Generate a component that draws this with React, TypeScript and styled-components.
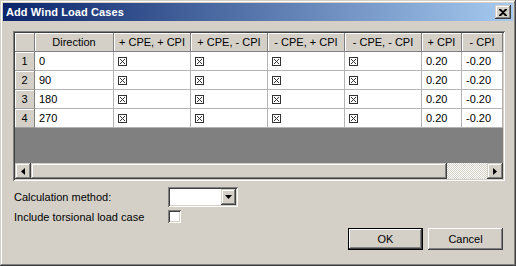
import React from "react";
import styled, { createGlobalStyle } from "styled-components";

const FACE = "#D4D0C8";

const GlobalStyle = createGlobalStyle`
  html, body { margin: 0; padding: 0; background: ${FACE}; }
  body { font-family: "Liberation Sans", Arial, sans-serif; font-size: 11px; color: #000; }
`;

const raised = `
  background: ${FACE};
  box-shadow: inset -1px -1px #404040, inset 1px 1px ${FACE}, inset -2px -2px #808080, inset 2px 2px #fff;
`;

const sunken = `
  box-shadow: inset 1px 1px #808080, inset -1px -1px #fff, inset 2px 2px #404040, inset -2px -2px ${FACE};
`;

const Window = styled.div`
  width: 516px;
  height: 266px;
  box-sizing: border-box;
  padding: 3px;
  display: flex;
  flex-direction: column;
  ${raised}
`;

const TitleBar = styled.div`
  height: 18px;
  flex: none;
  display: flex;
  align-items: center;
  justify-content: space-between;
  padding: 0 2px 0 3px;
  background: linear-gradient(to right, #0a246a, #a6caf0);
`;

const Title = styled.span`
  color: #fff;
  font-weight: bold;
  font-size: 11px;
  letter-spacing: 0.1px;
`;

const CloseButton = styled.div`
  width: 16px;
  height: 14px;
  display: flex;
  align-items: center;
  justify-content: center;
  ${raised}
`;

const Body = styled.div`
  flex: 1;
  display: flex;
  flex-direction: column;
  padding: 10px 8px 0 10px;
`;

const GridFrame = styled.div`
  width: 492px;
  height: 150px;
  box-sizing: border-box;
  padding: 2px;
  display: flex;
  flex-direction: column;
  background: #808080;
  ${sunken}
`;

const Table = styled.div`
  display: grid;
  grid-template-columns: 20px 79px 77px 77px 77px 77px 40px 41px;
  grid-auto-rows: 19px;
  flex: none;
`;

const HeadCell = styled.div<{ $corner?: boolean }>`
  box-sizing: border-box;
  background: ${FACE};
  border-right: 1px solid #808080;
  border-bottom: 1px solid #808080;
  box-shadow: inset 1px 1px #fff;
  display: flex;
  align-items: center;
  justify-content: center;
  font-size: 11px;
  white-space: nowrap;
`;

const RowHead = styled(HeadCell)`
  justify-content: center;
  border-bottom-color: #a0a0a0;
`;

const Cell = styled.div`
  box-sizing: border-box;
  background: #fff;
  border-right: 1px solid #b4b4b4;
  border-bottom: 1px solid #b4b4b4;
  display: flex;
  align-items: center;
  padding-left: 4px;
  font-size: 11px;
  white-space: nowrap;
`;

const Empty = styled.div`
  flex: 1;
  background: #808080;
`;

const ScrollBar = styled.div`
  height: 16px;
  flex: none;
  display: flex;
  background: ${FACE};
`;

const ScrollButton = styled.div`
  width: 16px;
  height: 16px;
  flex: none;
  display: flex;
  align-items: center;
  justify-content: center;
  ${raised}
`;

const Thumb = styled.div`
  width: 416px;
  height: 16px;
  ${raised}
`;

const Track = styled.div`
  flex: 1;
  background: repeating-conic-gradient(#fff 0 25%, ${FACE} 0 50%) 0 0 / 2px 2px;
`;

const Form = styled.div`
  display: grid;
  grid-template-columns: 155px auto;
  align-items: center;
  margin-top: 6px;
  row-gap: 3px;
`;

const Label = styled.span`
  font-size: 11px;
  padding-left: 1px;
`;

const Combo = styled.div`
  width: 70px;
  height: 20px;
  box-sizing: border-box;
  padding: 2px;
  background: #fff;
  display: flex;
  justify-content: flex-end;
  ${sunken}
`;

const ComboButton = styled(ScrollButton)`
  width: 15px;
  height: 16px;
`;

const CheckBox = styled.div`
  width: 13px;
  height: 13px;
  box-sizing: border-box;
  background: #fff;
  ${sunken}
`;

const Buttons = styled.div`
  display: flex;
  justify-content: flex-end;
  gap: 5px;
  margin-top: 5px;
  margin-right: 2px;
`;

const Button = styled.div<{ $default?: boolean }>`
  width: 75px;
  height: 22px;
  box-sizing: border-box;
  display: flex;
  align-items: center;
  justify-content: center;
  font-size: 11px;
  background: ${FACE};
  border: ${(p) => (p.$default ? "1px solid #000" : "0")};
  box-shadow: ${(p) =>
    p.$default
      ? `inset -1px -1px #404040, inset 1px 1px #fff, inset -2px -2px #808080`
      : `inset -1px -1px #404040, inset 1px 1px #fff, inset -2px -2px #808080, inset 2px 2px ${FACE}`};
`;

const Check = () => (
  <svg width="9" height="9" viewBox="0 0 9 9">
    <rect x="0.5" y="0.5" width="8" height="8" fill="#fff" stroke="#333" />
    <path d="M2 2 L7 7 M7 2 L2 7" stroke="#333" strokeWidth="1" />
  </svg>
);

const CloseIcon = () => (
  <svg width="8" height="7" viewBox="0 0 8 7">
    <path d="M0 0h2l2 2 2-2h2v1L5 3.5 8 6v1H6L4 5 2 7H0V6l3-2.5L0 1z" fill="#000" />
  </svg>
);

const Arrow = ({ dir }: { dir: "left" | "right" | "down" }) => {
  if (dir === "down")
    return (
      <svg width="7" height="4" viewBox="0 0 7 4">
        <path d="M0 0h7L3.5 4z" fill="#000" />
      </svg>
    );
  return (
    <svg width="4" height="7" viewBox="0 0 4 7">
      <path d={dir === "left" ? "M4 0v7L0 3.5z" : "M0 0v7L4 3.5z"} fill="#000" />
    </svg>
  );
};

const headers = ["Direction", "+ CPE, + CPI", "+ CPE, - CPI", "- CPE, + CPI", "- CPE, - CPI", "+ CPI", "- CPI"];
const rows = ["0", "90", "180", "270"];

export default function App() {
  return (
    <>
      <GlobalStyle />
      <Window>
        <TitleBar>
          <Title>Add Wind Load Cases</Title>
          <CloseButton>
            <CloseIcon />
          </CloseButton>
        </TitleBar>
        <Body>
          <GridFrame>
            <Table>
              <HeadCell $corner />
              {headers.map((h) => (
                <HeadCell key={h}>{h}</HeadCell>
              ))}
              {rows.map((r, i) => (
                <React.Fragment key={r}>
                  <RowHead>{i + 1}</RowHead>
                  <Cell>{r}</Cell>
                  {[0, 1, 2, 3].map((k) => (
                    <Cell key={k}>
                      <Check />
                    </Cell>
                  ))}
                  <Cell>0.20</Cell>
                  <Cell>-0.20</Cell>
                </React.Fragment>
              ))}
            </Table>
            <Empty />
            <ScrollBar>
              <ScrollButton>
                <Arrow dir="left" />
              </ScrollButton>
              <Thumb />
              <Track />
              <ScrollButton>
                <Arrow dir="right" />
              </ScrollButton>
            </ScrollBar>
          </GridFrame>
          <Form>
            <Label>Calculation method:</Label>
            <Combo>
              <ComboButton>
                <Arrow dir="down" />
              </ComboButton>
            </Combo>
            <Label>Include torsional load case</Label>
            <CheckBox />
          </Form>
          <Buttons>
            <Button $default>OK</Button>
            <Button>Cancel</Button>
          </Buttons>
        </Body>
      </Window>
    </>
  );
}
